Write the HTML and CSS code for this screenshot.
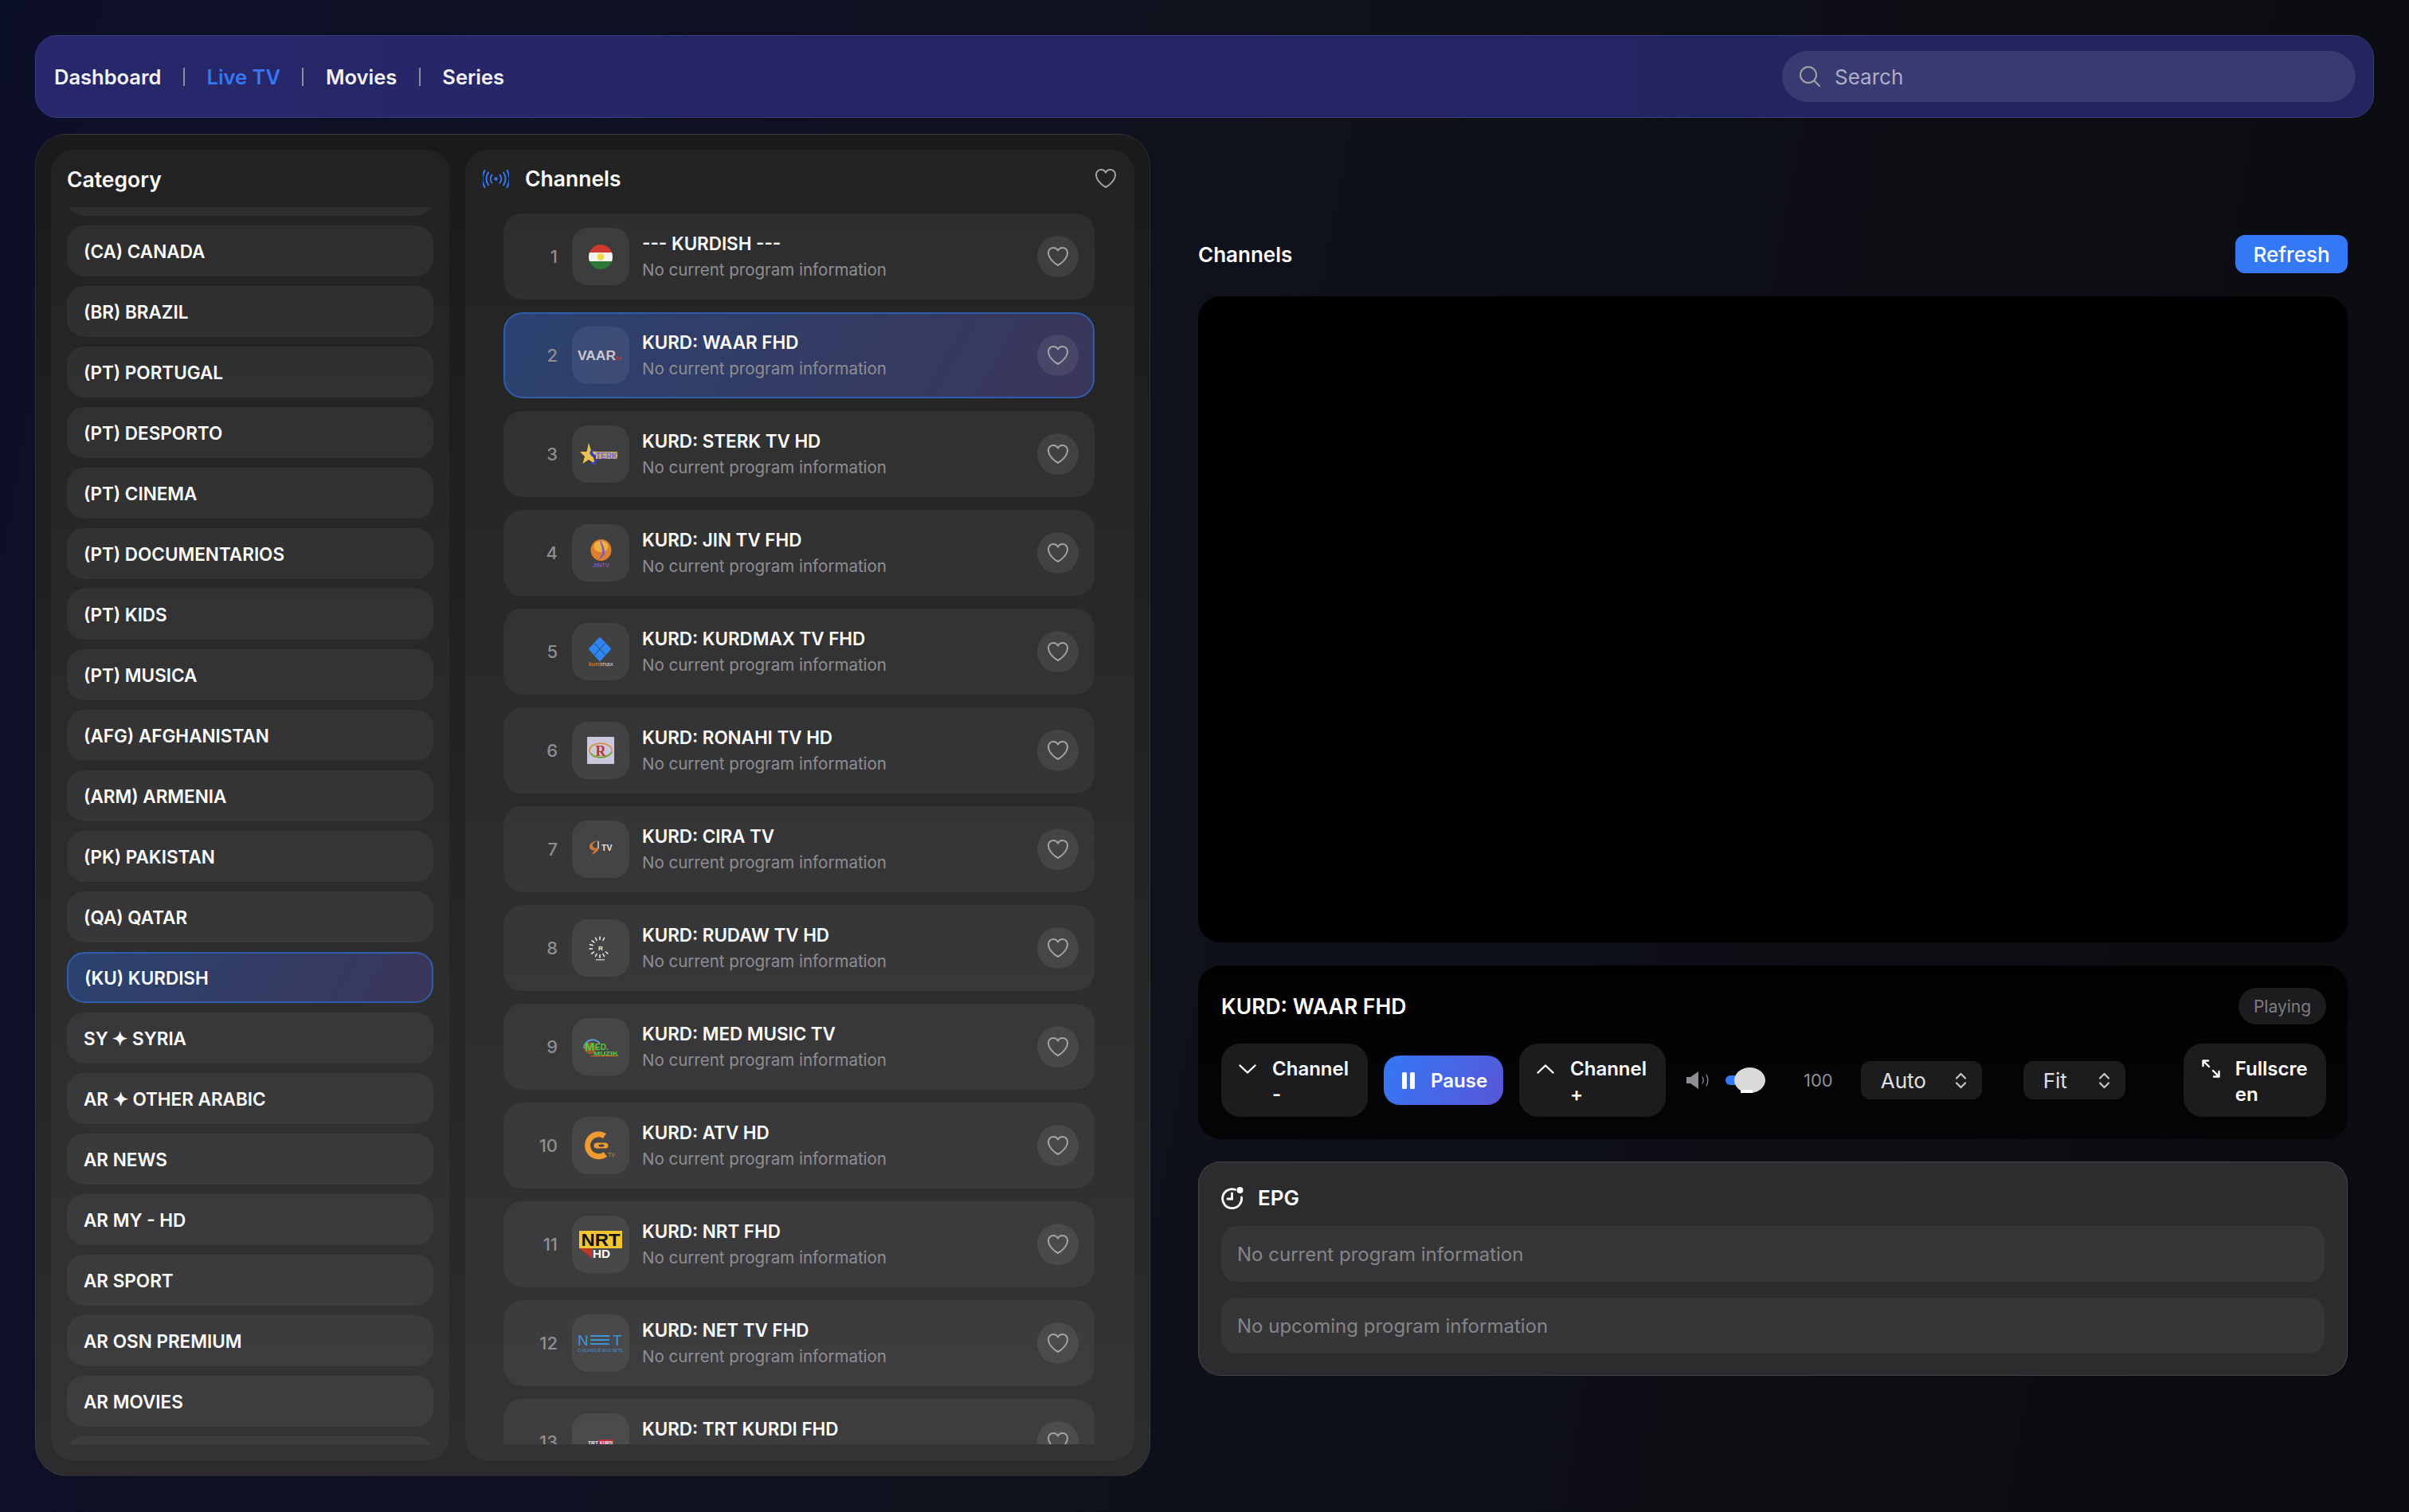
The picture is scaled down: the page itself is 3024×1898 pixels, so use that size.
FILE: index.html
```html
<!DOCTYPE html>
<html lang="en">
<head>
  <meta charset="UTF-8">
  <meta name="viewport" content="width=device-width, initial-scale=1.0">
  <title>Live TV</title>
  <link rel="stylesheet" href="styles.css">
</head>
<body>
  <svg class="icon-defs" width="0" height="0">
    <symbol id="heart" viewBox="0 0 24 24"><path d="M21 8.25c0-2.485-2.099-4.5-4.688-4.5-1.935 0-3.597 1.126-4.312 2.733-.715-1.607-2.377-2.733-4.313-2.733C5.1 3.75 3 5.765 3 8.25c0 7.22 9 12 9 12s9-4.78 9-12Z" fill="none" stroke="currentColor" stroke-width="1.5" stroke-linejoin="round"/></symbol>
    <symbol id="updown" viewBox="0 0 15 21"><path d="M2 7.5 7.5 2 13 7.5M2 13.5 7.5 19 13 13.5" fill="none" stroke="currentColor" stroke-width="2.2" stroke-linecap="round" stroke-linejoin="round"/></symbol>
  </svg>

  <nav class="topbar">
    <div class="nav-links">
      <a class="nav-link">Dashboard</a><span class="nav-sep"></span>
      <a class="nav-link active">Live TV</a><span class="nav-sep"></span>
      <a class="nav-link">Movies</a><span class="nav-sep"></span>
      <a class="nav-link">Series</a>
    </div>
    <label class="search">
      <svg class="search-icon" viewBox="0 0 24 24"><path d="m21 21-5.197-5.197m0 0A7.5 7.5 0 1 0 5.196 5.196a7.5 7.5 0 0 0 10.607 10.607Z" fill="none" stroke="currentColor" stroke-width="1.5" stroke-linecap="round"/></svg>
      <input class="search-input" type="text" placeholder="Search">
    </label>
  </nav>

  <div class="content">
    <section class="browser">
      <div class="column category-column">
        <h2 class="column-title category-title">Category</h2>
        <div class="scroll-list">
          <ul class="category-list">
            <li class="category-item"></li>
            <li class="category-item">(CA) CANADA</li>
            <li class="category-item">(BR) BRAZIL</li>
            <li class="category-item">(PT) PORTUGAL</li>
            <li class="category-item">(PT) DESPORTO</li>
            <li class="category-item">(PT) CINEMA</li>
            <li class="category-item">(PT) DOCUMENTARIOS</li>
            <li class="category-item">(PT) KIDS</li>
            <li class="category-item">(PT) MUSICA</li>
            <li class="category-item">(AFG) AFGHANISTAN</li>
            <li class="category-item">(ARM) ARMENIA</li>
            <li class="category-item">(PK) PAKISTAN</li>
            <li class="category-item">(QA) QATAR</li>
            <li class="category-item selected">(KU) KURDISH</li>
            <li class="category-item">SY ✦ SYRIA</li>
            <li class="category-item">AR ✦ OTHER ARABIC</li>
            <li class="category-item">AR NEWS</li>
            <li class="category-item">AR MY - HD</li>
            <li class="category-item">AR SPORT</li>
            <li class="category-item">AR OSN PREMIUM</li>
            <li class="category-item">AR MOVIES</li>
            <li class="category-item"></li>
          </ul>
        </div>
      </div>

      <div class="column channel-column">
        <div class="channel-head">
          <svg class="signal-icon" viewBox="0 0 33 23" fill="none" stroke="currentColor" stroke-width="2" stroke-linecap="round">
            <circle cx="16.5" cy="11.5" r="2.2" fill="currentColor" stroke="none"/>
            <path d="M11.5 6.5a8 8 0 0 0 0 10M21.5 6.5a8 8 0 0 1 0 10"/>
            <path d="M7 3.5a14 14 0 0 0 0 16M26 3.500a14 14 0 0 1 0 16"/>
            <path d="M2.500 1a20 20 0 0 0 0 21M30.500 1a20 20 0 0 1 0 21"/>
          </svg>
          <h2 class="column-title">Channels</h2>
          <svg class="head-heart"><use href="#heart"/></svg>
        </div>
        <div class="scroll-list channel-scroll">
          <ul class="channel-list">
            <li class="channel-row">
              <span class="channel-num">1</span>
              <div class="channel-logo">
                <svg viewBox="0 0 72 72">
                  <defs><clipPath id="flagClip"><ellipse cx="36" cy="36.500" rx="15" ry="15.500"/></clipPath></defs>
                  <g clip-path="url(#flagClip)">
                    <rect x="20" y="20" width="32" height="11" fill="#d2392e"/>
                    <rect x="20" y="31" width="32" height="11" fill="#f3f3f1"/>
                    <rect x="20" y="42" width="32" height="11" fill="#2c7a35"/>
                  </g>
                  <circle cx="36" cy="36.500" r="4.500" fill="#f2dc45"/>
                </svg>
              </div>
              <div class="channel-text"><div class="channel-name">--- KURDISH ---</div><div class="channel-epg">No current program information</div></div>
              <span class="fav-btn"><svg><use href="#heart"/></svg></span>
            </li>
            <li class="channel-row selected">
              <span class="channel-num">2</span>
              <div class="channel-logo">
                <svg viewBox="0 0 72 72">
                  <text x="7" y="42" class="logo-text" font-size="16" font-weight="700" fill="#c9c9cf" textLength="48" lengthAdjust="spacingAndGlyphs">VAAR</text>
                  <text x="55" y="42" class="logo-text" font-size="8" font-weight="700" fill="#c8352c">tv</text>
                </svg>
              </div>
              <div class="channel-text"><div class="channel-name">KURD: WAAR FHD</div><div class="channel-epg">No current program information</div></div>
              <span class="fav-btn"><svg><use href="#heart"/></svg></span>
            </li>
            <li class="channel-row">
              <span class="channel-num">3</span>
              <div class="channel-logo">
                <svg viewBox="0 0 72 72">
                  <path d="M21 22l3.400 10.500 9.600.5-7.500 6 3 10-8.500-6-7.500 5 2.500-9-6-6h8.500z" fill="#e9c34b"/>
                  <path d="M27 29c-7 3-5 9 0 11 5 3 1 7-6 9 8 1 13-3 10-9-3-4-7-6-4-11z" fill="#2c3fd0"/>
                  <rect x="30" y="33" width="27" height="9" fill="#c9b258"/>
                  <text x="30" y="41.500" class="logo-text" font-size="10" font-weight="700" fill="#7a63e8" textLength="27" lengthAdjust="spacingAndGlyphs">TERK</text>
                </svg>
              </div>
              <div class="channel-text"><div class="channel-name">KURD: STERK TV HD</div><div class="channel-epg">No current program information</div></div>
              <span class="fav-btn"><svg><use href="#heart"/></svg></span>
            </li>
            <li class="channel-row">
              <span class="channel-num">4</span>
              <div class="channel-logo">
                <svg viewBox="0 0 72 72">
                  <ellipse cx="36.500" cy="32.500" rx="13" ry="13.500" fill="#dd7f2d"/>
                  <ellipse cx="36.500" cy="28" rx="9" ry="7" fill="#edb23f"/>
                  <path d="M36.500 19c-3 6 2 8 1 13 2 5-2 8-4 12 6-2 9-7 7-13-1-5-4-7-4-12z" fill="#8a5bb5"/>
                  <text x="36.500" y="53.500" class="logo-text" font-size="7.500" font-weight="400" fill="#9c64c8" text-anchor="middle">JINTV</text>
                </svg>
              </div>
              <div class="channel-text"><div class="channel-name">KURD: JIN TV FHD</div><div class="channel-epg">No current program information</div></div>
              <span class="fav-btn"><svg><use href="#heart"/></svg></span>
            </li>
            <li class="channel-row">
              <span class="channel-num">5</span>
              <div class="channel-logo">
                <svg viewBox="0 0 72 72">
                  <path d="M35 19 48 32.500 35 47 22 32.500z" fill="#2f86f2" stroke="#2f86f2" stroke-width="2" stroke-linejoin="round"/>
                  <path d="M28.500 25.750 41.500 39.750M41.500 25.750 28.500 39.750" stroke="#27415f" stroke-width="1"/>
                  <text x="21" y="54" class="logo-text" font-size="8" font-weight="400" fill="#e58c2e">kurd<tspan fill="#d6d6d6">max</tspan></text>
                </svg>
              </div>
              <div class="channel-text"><div class="channel-name">KURD: KURDMAX TV FHD</div><div class="channel-epg">No current program information</div></div>
              <span class="fav-btn"><svg><use href="#heart"/></svg></span>
            </li>
            <li class="channel-row">
              <span class="channel-num">6</span>
              <div class="channel-logo">
                <svg viewBox="0 0 72 72">
                  <rect x="19" y="19" width="34" height="34" fill="#c9c8dc"/>
                  <ellipse cx="36" cy="36" rx="14" ry="9" fill="none" stroke="#d98a2b" stroke-width="1.500"/>
                  <path d="M24 40c4 6 20 7 26-2" fill="none" stroke="#6fa83a" stroke-width="2"/>
                  <text x="36" y="42.500" class="logo-serif" font-size="18" font-weight="700" fill="#c0332a" text-anchor="middle">R</text>
                </svg>
              </div>
              <div class="channel-text"><div class="channel-name">KURD: RONAHI TV HD</div><div class="channel-epg">No current program information</div></div>
              <span class="fav-btn"><svg><use href="#heart"/></svg></span>
            </li>
            <li class="channel-row">
              <span class="channel-num">7</span>
              <div class="channel-logo">
                <svg viewBox="0 0 72 72">
                  <path d="M35 25c-8 0-14 4-13 9 1 3 4 4 7 3-2 2-3 4-4 6 5-2 9-6 9-9-3 1-7 1-8-2-1-3 3-6 9-7z" fill="#c9793a"/>
                  <path d="M33 26v9" stroke="#d9d4c9" stroke-width="1.500"/>
                  <text x="37" y="38" class="logo-text" font-size="10.500" font-weight="700" fill="#e3e3e3">TV</text>
                </svg>
              </div>
              <div class="channel-text"><div class="channel-name">KURD: CIRA TV</div><div class="channel-epg">No current program information</div></div>
              <span class="fav-btn"><svg><use href="#heart"/></svg></span>
            </li>
            <li class="channel-row">
              <span class="channel-num">8</span>
              <div class="channel-logo">
                <svg viewBox="0 0 72 72">
                  <g stroke="#f2f2f2" stroke-width="1.500" stroke-linecap="round" transform="translate(35 35)">
                    <path d="M0-9.500V-13M4-8.500l1.500-3.200M-4-8.500l-1.500-3.200M-7-6l-2.800-2.200M-9-2.500l-3.500-.8M-9.500 2h-3.500M-7.500 6l-2.800 2.200M-4 8.500l-1.500 3M0 9.500V13M4 8.500l1.500 3M7.500 6l2.500 2"/>
                  </g>
                  <text x="36" y="38.500" class="logo-text" font-size="8" font-weight="700" fill="#f0f0f0" text-anchor="middle">R</text>
                  <rect x="30" y="50" width="11" height="1.500" fill="#bdbdbd"/>
                </svg>
              </div>
              <div class="channel-text"><div class="channel-name">KURD: RUDAW TV HD</div><div class="channel-epg">No current program information</div></div>
              <span class="fav-btn"><svg><use href="#heart"/></svg></span>
            </li>
            <li class="channel-row">
              <span class="channel-num">9</span>
              <div class="channel-logo">
                <svg viewBox="0 0 72 72">
                  <path d="M15 38a11 11 0 0 1 20-6" fill="none" stroke="#5d9fe0" stroke-width="2"/>
                  <circle cx="23" cy="38" r="7.500" fill="#8c5a32"/>
                  <text x="16" y="40.500" class="logo-text" font-size="15" font-weight="700" fill="#58c93f">M</text>
                  <text x="29" y="40" class="logo-text" font-size="10" font-weight="700" fill="#58c93f">ED.</text>
                  <text x="27" y="46.500" class="logo-text" font-size="7.500" font-weight="700" fill="#58c93f" textLength="31" lengthAdjust="spacingAndGlyphs">MUZIK</text>
                  <rect x="23" y="47" width="35" height="1.200" fill="#c8601f"/>
                </svg>
              </div>
              <div class="channel-text"><div class="channel-name">KURD: MED MUSIC TV</div><div class="channel-epg">No current program information</div></div>
              <span class="fav-btn"><svg><use href="#heart"/></svg></span>
            </li>
            <li class="channel-row">
              <span class="channel-num">10</span>
              <div class="channel-logo">
                <svg viewBox="0 0 72 72">
                  <path d="M41 24A14 14 0 1 0 42 47" fill="none" stroke="#f09a33" stroke-width="7"/>
                  <path d="M31 36h11" stroke="#f09a33" stroke-width="7" stroke-linecap="round"/>
                  <ellipse cx="37" cy="36" rx="3.500" ry="1.500" fill="#3d3d3d"/>
                  <text x="45" y="50" class="logo-text" font-size="7" font-weight="400" fill="#d48a35">TV</text>
                </svg>
              </div>
              <div class="channel-text"><div class="channel-name">KURD: ATV HD</div><div class="channel-epg">No current program information</div></div>
              <span class="fav-btn"><svg><use href="#heart"/></svg></span>
            </li>
            <li class="channel-row">
              <span class="channel-num">11</span>
              <div class="channel-logo">
                <svg viewBox="0 0 72 72">
                  <rect x="9" y="19" width="54" height="22" fill="#f2c531"/>
                  <path d="M9 41h17v13z" fill="#bb3a25"/>
                  <text x="36" y="38" class="logo-text" font-size="22" font-weight="700" fill="#111" text-anchor="middle" textLength="49" lengthAdjust="spacingAndGlyphs">NRT</text>
                  <text x="26" y="53" class="logo-text" font-size="15" font-weight="700" fill="#fff" textLength="22" lengthAdjust="spacingAndGlyphs">HD</text>
                </svg>
              </div>
              <div class="channel-text"><div class="channel-name">KURD: NRT FHD</div><div class="channel-epg">No current program information</div></div>
              <span class="fav-btn"><svg><use href="#heart"/></svg></span>
            </li>
            <li class="channel-row">
              <span class="channel-num">12</span>
              <div class="channel-logo">
                <svg viewBox="0 0 72 72">
                  <text x="7" y="39" class="logo-text" font-size="19" font-weight="400" fill="#3f94d8">N</text>
                  <path d="M23 27h24M23 32h24M23 37h24" stroke="#3f94d8" stroke-width="2"/>
                  <text x="51" y="39" class="logo-text" font-size="19" font-weight="400" fill="#3f94d8">T</text>
                  <text x="7" y="46.500" class="logo-text" font-size="5" fill="#3f94d8" textLength="57" lengthAdjust="spacingAndGlyphs">O MUNDO É DOS NETS</text>
                </svg>
              </div>
              <div class="channel-text"><div class="channel-name">KURD: NET TV FHD</div><div class="channel-epg">No current program information</div></div>
              <span class="fav-btn"><svg><use href="#heart"/></svg></span>
            </li>
            <li class="channel-row">
              <span class="channel-num">13</span>
              <div class="channel-logo">
                <svg viewBox="0 0 72 72">
                  <rect x="34" y="33" width="18" height="7" fill="#b92d3d"/>
                  <text x="20" y="39.500" class="logo-text" font-size="7" font-weight="700" fill="#e6e6e6" textLength="13" lengthAdjust="spacingAndGlyphs">TRT</text>
                  <text x="35" y="39.500" class="logo-text" font-size="7" font-weight="700" fill="#f2f2f2" textLength="16" lengthAdjust="spacingAndGlyphs">KURDI</text>
                </svg>
              </div>
              <div class="channel-text"><div class="channel-name">KURD: TRT KURDI FHD</div><div class="channel-epg">No current program information</div></div>
              <span class="fav-btn"><svg><use href="#heart"/></svg></span>
            </li>
          </ul>
        </div>
      </div>
    </section>

    <section class="player-column">
      <header class="player-head">
        <h2 class="player-heading">Channels</h2>
        <button class="refresh-btn">Refresh</button>
      </header>
      <div class="video"></div>

      <div class="controls-card">
        <div class="now-playing">
          <h3 class="now-title">KURD: WAAR FHD</h3>
          <span class="status-pill">Playing</span>
        </div>
        <div class="controls">
          <button class="ctrl-btn channel-btn">
            <svg class="chevron" viewBox="0 0 22 12"><path d="M1.500 1.500 11 10.500l9.500-9" fill="none" stroke="currentColor" stroke-width="2.400" stroke-linecap="round" stroke-linejoin="round"/></svg>
            <span class="ctrl-label">Channel -</span>
          </button>
          <button class="pause-btn">
            <svg class="pause-icon" viewBox="0 0 16 21"><rect width="6" height="21" rx="1.500" fill="currentColor"/><rect x="10" width="6" height="21" rx="1.500" fill="currentColor"/></svg>
            Pause
          </button>
          <button class="ctrl-btn channel-btn">
            <svg class="chevron" viewBox="0 0 22 12"><path d="M1.500 10.500 11 1.500l9.500 9" fill="none" stroke="currentColor" stroke-width="2.400" stroke-linecap="round" stroke-linejoin="round"/></svg>
            <span class="ctrl-label">Channel +</span>
          </button>
          <div class="volume">
            <svg class="speaker" viewBox="0 0 29 22" fill="none">
              <path d="M0 7h5l10-7v22L5 15H0z" fill="#8e8e93"/>
              <path d="M20 7c1.500 2.500 1.500 5.500 0 8M25 4c2.500 4 2.500 10 0 14" stroke="#8e8e93" stroke-width="1.300" stroke-linecap="round"/>
            </svg>
            <div class="volume-slider"><span class="volume-fill"></span><span class="volume-thumb"></span></div>
            <span class="volume-value">100</span>
          </div>
          <div class="select-box quality-select"><span>Auto</span><svg class="updown"><use href="#updown"/></svg></div>
          <div class="select-box fit-select"><span>Fit</span><svg class="updown"><use href="#updown"/></svg></div>
          <button class="ctrl-btn fullscreen-btn">
            <svg class="fs-icon" viewBox="0 0 23 23"><path d="M1.500 8V1.500H8M1.500 1.500 9 9M21.500 15v6.500H15M21.500 21.500 14 14" fill="none" stroke="currentColor" stroke-width="2.400" stroke-linecap="round" stroke-linejoin="round"/></svg>
            <span class="ctrl-label fs-label">Fullscreen</span>
          </button>
        </div>
      </div>

      <div class="epg-card">
        <div class="epg-head">
          <svg class="epg-icon" viewBox="0 0 28 28" fill="none" stroke="currentColor" stroke-width="2.800" stroke-linecap="round">
            <path d="M17.500 3.300A12 12 0 1 0 25.500 13"/>
            <circle cx="23.500" cy="4" r="4" fill="currentColor" stroke="none"/>
            <path d="M13.500 8v7H8"/>
          </svg>
          <h3 class="epg-title">EPG</h3>
        </div>
        <div class="epg-row">No current program information</div>
        <div class="epg-row">No upcoming program information</div>
      </div>
    </section>
  </div>
</body>
</html>
```

FILE: styles.css
```css
* {
  box-sizing: border-box;
}

html, body {
  height: 100%;
}

body {
  margin: 0;
  padding: 44px 44px 0;
  overflow: hidden;
  background: linear-gradient(100deg, #0c0f28 0%, #0f1122 30%, #0f111a 52%, #0c0e13 80%, #0a0b0e 100%);
  color: #fff;
  font-family: Inter, "Noto Sans", sans-serif;
}

h2, h3, ul {
  margin: 0;
  padding: 0;
}

ul {
  list-style: none;
}

.icon-defs {
  position: absolute;
}

/* top bar */
.topbar {
  display: flex;
  align-items: center;
  justify-content: space-between;
  height: 104px;
  padding: 0 22px 0 23px;
  border: 1px solid #3a3a7a;
  border-radius: 28px;
  background: linear-gradient(90deg, #27276b, #22235f);
}

.nav-links {
  display: flex;
  align-items: center;
  gap: 27.500px;
}

.nav-link {
  font-size: 25.500px;
  font-weight: 600;
  color: #f2f2f7;
}

.nav-link.active {
  color: #3478f6;
}

.nav-sep {
  width: 2px;
  height: 23px;
  background: #8e8e93;
}

.search {
  display: flex;
  align-items: center;
  gap: 13px;
  width: 720px;
  height: 64px;
  padding: 0 19px;
  border-radius: 32px;
  background: rgba(255, 255, 255, 0.1);
}

.search-icon {
  width: 32px;
  height: 32px;
  color: #a5a39f;
}

.search-input {
  flex: 1;
  border: 0;
  outline: 0;
  background: none;
  color: #fff;
  font: 400 26px Inter, sans-serif;
}

.search-input::placeholder {
  color: #aeadc9;
  opacity: 1;
}

/* main layout */
.content {
  display: grid;
  grid-template-columns: 1400px 1fr;
  column-gap: 60px;
  margin-top: 20px;
  padding-right: 33px;
}

.browser {
  display: grid;
  grid-template-columns: 500px 840px;
  column-gap: 20px;
  height: 1685px;
  padding: 19px;
  border: 1px solid rgba(255, 255, 255, 0.08);
  border-radius: 40px;
  background: linear-gradient(180deg, #1a1a1b, #2c2c2e);
}

.column {
  display: flex;
  flex-direction: column;
  min-height: 0;
  padding-bottom: 20px;
  border-radius: 28px;
  background: rgba(255, 255, 255, 0.04);
}

.column-title {
  font-size: 26.500px;
  font-weight: 600;
  line-height: 34px;
}

.category-title {
  height: 72px;
  padding: 20px 0 0 20px;
}

.scroll-list {
  flex: 1;
  min-height: 0;
  overflow: hidden;
}

.category-list {
  display: flex;
  flex-direction: column;
  gap: 12px;
  margin-top: -53px;
  padding: 0 20px;
}

.category-item {
  flex: none;
  display: flex;
  align-items: center;
  height: 64px;
  padding: 0 20px;
  border: 1px solid transparent;
  border-radius: 22px;
  background: rgba(255, 255, 255, 0.05);
  font-size: 22.500px;
  font-weight: 600;
}

.category-item.selected,
.channel-row.selected {
  border: 2px solid #2f5cab;
  background: linear-gradient(120deg, #2b4270, #3a3659);
}

/* channels */
.channel-head {
  display: flex;
  align-items: center;
  gap: 20px;
  height: 72px;
  padding: 0 20px 0 22px;
}

.signal-icon {
  width: 33px;
  height: 23px;
  color: #3478f6;
}

.head-heart {
  width: 32px;
  height: 32px;
  margin-left: auto;
  color: #a4a4a8;
}

.channel-scroll {
  padding: 8px 50px 0 48px;
}

.channel-list {
  display: flex;
  flex-direction: column;
  gap: 16px;
}

.channel-row {
  flex: none;
  display: flex;
  align-items: center;
  height: 108px;
  padding: 0 19px 0 17px;
  border: 1px solid transparent;
  border-radius: 24px;
  background: rgba(255, 255, 255, 0.05);
}

.channel-row.selected {
  padding: 0 18px 0 16px;
}

.channel-num {
  flex: none;
  width: 50px;
  margin-right: 18px;
  text-align: right;
  font-size: 22px;
  font-weight: 500;
  color: #8e8e93;
}

.channel-logo {
  flex: none;
  width: 72px;
  height: 72px;
  border-radius: 20px;
  background: rgba(255, 255, 255, 0.07);
}

.channel-logo svg {
  display: block;
  width: 72px;
  height: 72px;
}

.logo-text {
  font-family: "Liberation Sans", sans-serif;
}

.logo-serif {
  font-family: "Liberation Serif", serif;
}

.channel-text {
  flex: 1;
  min-width: 0;
  margin-left: 16px;
}

.channel-name {
  margin-bottom: 3px;
  font-size: 22.400px;
  font-weight: 600;
  line-height: 30px;
}

.channel-epg {
  font-size: 20.500px;
  line-height: 30px;
  color: #8e8e93;
}

.fav-btn {
  flex: none;
  display: flex;
  align-items: center;
  justify-content: center;
  width: 52px;
  height: 52px;
  border-radius: 50%;
  background: rgba(255, 255, 255, 0.08);
  color: #a4a4a8;
}

.fav-btn svg {
  width: 32px;
  height: 32px;
}

/* player */
.player-column {
  padding-top: 127px;
}

.player-head {
  display: flex;
  align-items: center;
  justify-content: space-between;
  height: 48px;
  margin-bottom: 29px;
}

.player-heading {
  font-size: 26px;
  font-weight: 600;
}

.refresh-btn {
  width: 141px;
  height: 48px;
  border: 0;
  border-radius: 12px;
  background: #3478f6;
  color: #fff;
  font: 500 26px Inter, sans-serif;
}

.video {
  height: 811px;
  border-radius: 28px;
  background: #000;
}

.controls-card {
  height: 218px;
  margin-top: 29px;
  padding: 28px 27px 28px 29px;
  border-radius: 28px;
  background: linear-gradient(180deg, #010102, #050507);
}

.now-playing {
  display: flex;
  align-items: center;
  justify-content: space-between;
  height: 46px;
  margin-bottom: 24px;
}

.now-title {
  font-size: 26.500px;
  font-weight: 600;
}

.status-pill {
  display: flex;
  align-items: center;
  justify-content: center;
  width: 110px;
  height: 46px;
  border-radius: 23px;
  background: #1c1c1e;
  font-size: 21px;
  color: #7c7c80;
}

.controls {
  display: flex;
  align-items: center;
  height: 92px;
}

.ctrl-btn {
  display: flex;
  align-items: flex-start;
  height: 92px;
  padding: 16px 20px;
  border: 0;
  border-radius: 24px;
  background: #1c1c1e;
  color: #fff;
  text-align: left;
  font: 600 24px/32px Inter, sans-serif;
}

.channel-btn {
  gap: 20px;
  width: 184px;
}

.ctrl-label {
  width: min-content;
}

.chevron {
  flex: none;
  width: 22px;
  height: 12px;
  margin: 10px 0 0 2px;
}

.pause-btn {
  display: flex;
  align-items: center;
  gap: 20px;
  width: 150px;
  height: 62px;
  margin: 0 20px;
  padding: 0 0 0 23px;
  border: 0;
  border-radius: 20px;
  background: linear-gradient(120deg, #3478f6, #5856d6);
  color: #fff;
  font: 600 24px Inter, sans-serif;
}

.pause-icon {
  width: 16px;
  height: 21px;
}

.volume {
  display: flex;
  align-items: center;
  margin-left: 26px;
}

.speaker {
  width: 29px;
  height: 22px;
}

.volume-slider {
  display: flex;
  align-items: center;
  margin: 0 48px 0 20px;
}

.volume-fill {
  width: 14px;
  height: 12px;
  border-radius: 6px 0 0 6px;
  background: #3478f6;
}

.volume-thumb {
  position: relative;
  width: 39px;
  height: 32px;
  margin-left: -3px;
  border-radius: 50%;
  background: #d9d9d9;
}

.volume-thumb::after {
  content: "";
  position: absolute;
  left: 8px;
  bottom: 0;
  width: 15px;
  height: 4px;
  background: #fff;
}

.volume-value {
  font-size: 22px;
  color: #8e8e93;
}

.select-box {
  display: flex;
  align-items: center;
  justify-content: space-between;
  height: 48px;
  padding: 0 19px 0 25px;
  border-radius: 12px;
  background: #1c1c1e;
  font-size: 26px;
  color: #e0e0e0;
}

.quality-select {
  width: 152px;
  margin-left: 35px;
}

.fit-select {
  width: 128px;
  margin-left: 52px;
}

.updown {
  width: 15px;
  height: 21px;
  color: #c8c8c8;
}

.fullscreen-btn {
  gap: 19px;
  width: 179px;
  margin-left: 73px;
  padding-left: 23px;
  padding-right: 18px;
}

.fs-icon {
  flex: none;
  width: 23px;
  height: 23px;
  margin-top: 4px;
}

.fs-label {
  flex: 1;
  width: auto;
  min-width: 0;
  overflow-wrap: anywhere;
}

/* epg */
.epg-card {
  height: 269px;
  margin-top: 28px;
  padding: 28px;
  border: 1px solid rgba(255, 255, 255, 0.12);
  border-radius: 28px;
  background: #2c2c2e;
}

.epg-head {
  display: flex;
  align-items: center;
  gap: 18px;
  height: 33px;
  margin-bottom: 19px;
}

.epg-icon {
  width: 28px;
  height: 28px;
}

.epg-title {
  font-size: 26px;
  font-weight: 600;
}

.epg-row {
  display: flex;
  align-items: center;
  height: 70px;
  padding: 0 20px;
  border-radius: 20px;
  background: rgba(255, 255, 255, 0.05);
  font-size: 24px;
  color: #858589;
}

.epg-row + .epg-row {
  margin-top: 20px;
}
```
